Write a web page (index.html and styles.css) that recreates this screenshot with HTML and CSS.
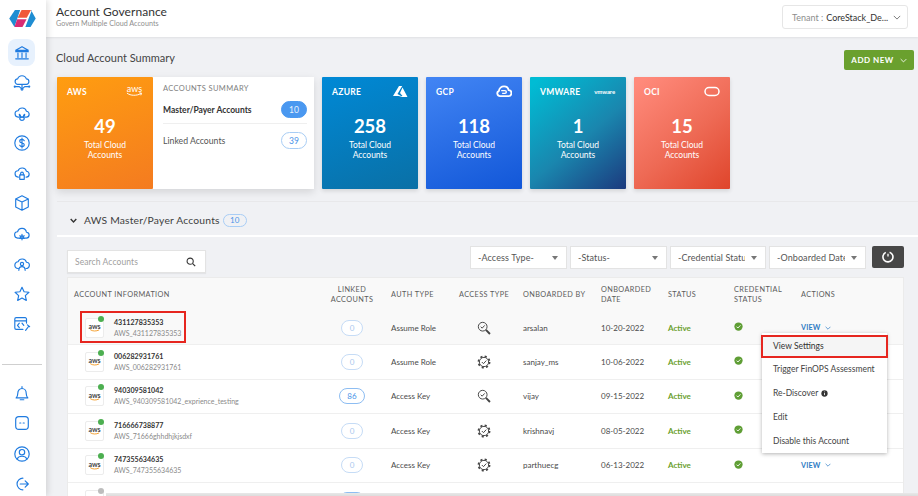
FILE: index.html
```html
<!DOCTYPE html>
<html lang="en">
<head>
<meta charset="utf-8">
<title>Account Governance</title>
<link rel="stylesheet" href="styles.css">
</head>
<body>
<svg class="defs" width="0" height="0">
  <symbol id="i-check" viewBox="0 0 12 12"><circle cx="6" cy="6" r="5.5" fill="#5f9e35"/><path d="M3.4 6.2l1.8 1.8 3.4-3.6" fill="none" stroke="#fff" stroke-width="1.2"/></symbol>
  <symbol id="i-gear" viewBox="0 0 16 16"><circle cx="8" cy="8" r="5.3" fill="none" stroke="#444" stroke-width="1.1"/><circle cx="8" cy="8" r="6.4" fill="none" stroke="#444" stroke-width="1.9" stroke-dasharray="2.4 2.63"/><path d="M5.5 8l1.900 1.900 3.200-3.500" fill="none" stroke="#444" stroke-width="1.1"/></symbol>
  <symbol id="i-key" viewBox="0 0 16 16"><circle cx="6.5" cy="6.5" r="5" fill="none" stroke="#444" stroke-width="1.1"/><path d="M4.2 6.5l1.7 1.7 2.9-3.2" fill="none" stroke="#444" stroke-width="1.1"/><path d="M10.200 10.200l4.600 4.600" stroke="#444" stroke-width="2.200"/></symbol>
  <symbol id="i-chev" viewBox="0 0 10 6"><path d="M1 1l4 4 4-4" fill="none" stroke="currentColor" stroke-width="1.2"/></symbol>
  <symbol id="i-chev-b" viewBox="0 0 10 6"><path d="M1 1l4 4 4-4" fill="none" stroke="currentColor" stroke-width="2"/></symbol>
</svg>

<div class="app">
  <aside class="sidebar">
    <svg class="logo" viewBox="0 0 28 18">
      <path d="M0 9L6 0h5.500L5.500 18z" fill="#1f8dd2"/>
      <path d="M23 0l5 9-5.500 9H17L24 0z" fill="#1f8dd2"/>
      <path d="M13 0h10l-4.500 8.300H8.800z" fill="#f0583a"/>
      <path d="M8.300 9.700h10L14 18H5.500z" fill="#d92c73"/>
    </svg>
    <nav class="nav nav-main">
      <a class="nav-item active"><svg viewBox="0 0 20 20" class="ni"><path d="M3 7l7-4 7 4zM3 8.500h14M5.500 10v5M10 10v5M14.500 10v5M3 16.500h14"/></svg></a>
      <a class="nav-item"><svg viewBox="0 0 20 20" class="ni"><path d="M5.500 11.500a3 3 0 0 1-.3-6 5 5 0 0 1 9.600 0 3 3 0 0 1-.3 6zM10 11.500V16M2 14h5l1.500 1.500M18 14h-5l-1.500 1.500"/><circle cx="10" cy="17" r="1"/><circle cx="2" cy="14" r=".6"/><circle cx="18" cy="14" r=".6"/></svg></a>
      <a class="nav-item"><svg viewBox="0 0 20 20" class="ni"><path d="M6 14.500a3.500 3.500 0 0 1-.4-7 5 5 0 0 1 9.400.6 3.200 3.200 0 0 1-.5 6.400H6z"/><path d="M7 11.500a3 3 0 0 0 6 0 3 3 0 0 0-.3 5 3 3 0 0 1-5.400 0A3 3 0 0 0 7 11.500z"/></svg></a>
      <a class="nav-item"><svg viewBox="0 0 20 20" class="ni"><circle cx="10" cy="10" r="8"/><path d="M12.500 7.500C12 6.500 11 6 10 6c-1.500 0-2.500.8-2.500 2s1 1.700 2.500 2 2.500.8 2.500 2-1 2-2.500 2c-1 0-2-.5-2.500-1.500M10 4.500v11"/></svg></a>
      <a class="nav-item"><svg viewBox="0 0 20 20" class="ni"><path d="M6 14.500a3.500 3.500 0 0 1-.4-7 5 5 0 0 1 9.400.6 3.200 3.200 0 0 1-.5 6.400"/><rect x="7.500" y="12" width="5" height="5"/><path d="M8.500 12v-1.500a1.500 1.500 0 0 1 3 0V12"/></svg></a>
      <a class="nav-item"><svg viewBox="0 0 20 20" class="ni"><path d="M10 2l7 3.500v9L10 18l-7-3.500v-9zM3 5.500L10 9l7-3.500M10 9v9"/></svg></a>
      <a class="nav-item"><svg viewBox="0 0 20 20" class="ni"><path d="M5.500 14.500a3.500 3.500 0 0 1-.4-7 5 5 0 0 1 9.800.6 3.200 3.200 0 0 1-.4 6.400z"/><circle cx="10" cy="13.500" r="1.500"/><path d="M10 10.500v1.500M10 15v1.500M7.500 12l1.300.8M12.500 15l-1.300-.8M7.500 15l1.300-.8M12.500 12l-1.300.8"/></svg></a>
      <a class="nav-item"><svg viewBox="0 0 20 20" class="ni"><path d="M6 15a3.500 3.500 0 0 1-.4-7.500 5 5 0 0 1 9.400.6 3.400 3.400 0 0 1-.6 6.900"/><circle cx="10" cy="10" r="1.800"/><path d="M6.500 17c0-2.500 1.500-4 3.500-4s3.500 1.500 3.500 4"/></svg></a>
      <a class="nav-item"><svg viewBox="0 0 20 20" class="ni"><path d="M10 2.500l2.300 5 5.400.6-4 3.700 1.100 5.400L10 14.500l-4.800 2.700 1.100-5.400-4-3.700 5.400-.6z"/></svg></a>
      <a class="nav-item"><svg viewBox="0 0 20 20" class="ni"><path d="M15 9V4.500a1.500 1.500 0 0 0-1.500-1.500h-10A1.500 1.500 0 0 0 2 4.500v10A1.500 1.500 0 0 0 3.500 16H11M2 6.500h13M7 9l-2 2.500L7 14M10 9l2 2.500M14 17l3.500-4.500M16 11l2.500 2"/></svg></a>
    </nav>
    <div class="nav-divider"></div>
    <nav class="nav nav-main">
      <a class="nav-item"><svg viewBox="0 0 20 20" class="ni"><path d="M3.500 15.500c1.500-1.500 1.800-2.500 1.800-5 0-3 2-5.500 4.700-5.500s4.700 2.500 4.700 5.500c0 2.500.3 3.500 1.800 5zM10 3v2M8 17.500h4"/></svg></a>
      <a class="nav-item"><svg viewBox="0 0 20 20" class="ni"><rect x="3" y="3" width="14" height="14" rx="3.500"/><path d="M7.500 10h1.200M11.300 10h1.200"/></svg></a>
      <a class="nav-item"><svg viewBox="0 0 20 20" class="ni"><circle cx="10" cy="10" r="8"/><circle cx="10" cy="8" r="3"/><path d="M4.500 15.500c1-2 3-3 5.500-3s4.500 1 5.500 3"/></svg></a>
      <a class="nav-item"><svg viewBox="0 0 20 20" class="ni"><path d="M11 3.500A6.500 6.500 0 1 0 11 16.500M8 10h9M13.500 6.500L17 10l-3.500 3.500"/></svg></a>
    </nav>
  </aside>

  <div class="content">
    <header class="topbar">
      <div class="titles">
        <h1 class="title">Account Governance</h1>
        <p class="subtitle">Govern Multiple Cloud Accounts</p>
      </div>
      <div class="tenant">
        <span class="tenant-label">Tenant :</span>
        <span class="tenant-value">CoreStack_De...</span>
        <svg class="tenant-chev"><use href="#i-chev"/></svg>
      </div>
    </header>

    <main class="main">
      <div class="summary-head">
        <h2 class="summary-title">Cloud Account Summary</h2>
        <button class="add-new">ADD NEW <svg class="add-chev"><use href="#i-chev"/></svg></button>
      </div>

      <div class="cards">
        <div class="aws-group">
          <div class="card card-aws">
            <div class="card-top"><span class="card-name">AWS</span>
              <span class="aws-mark"><span class="aws-word">aws</span><svg viewBox="0 0 18 5" class="smile"><path d="M1 1c4 3 10 3 15 .5M14 .8l2.500.3-.8 2.200" fill="none" stroke="#fff" stroke-width="1"/></svg></span></div>
            <div class="card-num">49</div>
            <div class="card-label">Total Cloud<br>Accounts</div>
          </div>
          <div class="acc-summary">
            <div class="acc-title">ACCOUNTS SUMMARY</div>
            <div class="acc-row acc-row-line"><b class="acc-strong">Master/Payer Accounts</b><span class="pill pill-solid">10</span></div>
            <div class="acc-row"><span class="acc-name">Linked Accounts</span><span class="pill">39</span></div>
          </div>
        </div>
        <div class="card card-azure">
          <div class="card-top"><span class="card-name">AZURE</span>
            <svg viewBox="0 0 16 12" class="card-logo"><path d="M7 .5h3.200L5.500 8.500 9 10.500H1zM10.500 2L15.500 11.500H6.500l4-1-2.500-3z" fill="#fff"/></svg></div>
          <div class="card-num">258</div>
          <div class="card-label">Total Cloud<br>Accounts</div>
        </div>
        <div class="card card-gcp">
          <div class="card-top"><span class="card-name">GCP</span>
            <svg viewBox="0 0 16 14" class="card-logo"><path d="M8 1.500a5 5 0 0 1 5 4 3.200 3.200 0 0 1-.5 6.500H4a3 3 0 0 1-1.500-5.700A5.500 5.500 0 0 1 8 1.500z" fill="none" stroke="#fff" stroke-width="2"/><path d="M5 6h4a1.500 1.500 0 0 1 0 3H6" fill="none" stroke="#fff" stroke-width="1.500"/></svg></div>
          <div class="card-num">118</div>
          <div class="card-label">Total Cloud<br>Accounts</div>
        </div>
        <div class="card card-vmware">
          <div class="card-top"><span class="card-name">VMWARE</span><span class="vm-word">vmware</span></div>
          <div class="card-num">1</div>
          <div class="card-label">Total Cloud<br>Accounts</div>
        </div>
        <div class="card card-oci">
          <div class="card-top"><span class="card-name">OCI</span>
            <svg viewBox="0 0 16 10" class="card-logo"><rect x="1" y="1" width="14" height="8" rx="4" fill="none" stroke="#fff" stroke-width="1.500"/></svg></div>
          <div class="card-num">15</div>
          <div class="card-label">Total Cloud<br>Accounts</div>
        </div>
      </div>

      <section class="panel">
        <div class="panel-head">
          <svg class="panel-chev"><use href="#i-chev-b"/></svg>
          <h3 class="panel-title">AWS Master/Payer Accounts</h3>
          <span class="pill pill-small">10</span>
        </div>

        <div class="toolbar">
          <div class="search">
            <span class="search-text">Search Accounts</span>
            <svg viewBox="0 0 12 12" class="search-icon"><circle cx="5" cy="5" r="3.700" fill="none" stroke="#333" stroke-width="1.300"/><path d="M8 8l3 3" stroke="#333" stroke-width="1.500"/></svg>
          </div>
          <div class="filters">
            <div class="filter">-Access Type-<i class="caret"></i></div>
            <div class="filter">-Status-<i class="caret"></i></div>
            <div class="filter filter-narrow"><span class="clip">-Credential Status-</span><i class="caret"></i></div>
            <div class="filter"><span class="clip">-Onboarded Date-</span><i class="caret"></i></div>
            <button class="reset"><svg viewBox="0 0 14 14" class="reset-icon"><path d="M8.600 2.200a5 5 0 1 1-3.800.2" fill="none" stroke="#fff" stroke-width="1.600"/><path d="M7 3.800v2.700" stroke="#fff" stroke-width="1.300"/></svg></button>
          </div>
        </div>

        <div class="table">
          <div class="row row-head">
            <div class="c c1">ACCOUNT INFORMATION</div>
            <div class="c c2">LINKED ACCOUNTS</div>
            <div class="c c3">AUTH TYPE</div>
            <div class="c c4">ACCESS TYPE</div>
            <div class="c c5">ONBOARDED BY</div>
            <div class="c c6">ONBOARDED DATE</div>
            <div class="c c7">STATUS</div>
            <div class="c c8">CREDENTIAL STATUS</div>
            <div class="c c9">ACTIONS</div>
          </div>

          <div class="row row-first">
            <div class="c c1 acct"><span class="aws-box"><span class="aws-dark">aws</span><svg viewBox="0 0 18 5" class="smile-o"><path d="M1 1c4 3 10 3 15 .5" fill="none" stroke="#f29111" stroke-width="1.400"/></svg><i class="dot"></i></span><div><div class="acct-id">431127835353</div><div class="acct-name">AWS_431127835353</div></div></div>
            <div class="c c2"><span class="pill pill-zero">0</span></div>
            <div class="c c3">Assume Role</div>
            <div class="c c4"><svg class="at"><use href="#i-key"/></svg></div>
            <div class="c c5">arsalan</div>
            <div class="c c6">10-20-2022</div>
            <div class="c c7 active">Active</div>
            <div class="c c8"><svg class="ok"><use href="#i-check"/></svg></div>
            <div class="c c9 view">VIEW <svg class="view-chev"><use href="#i-chev"/></svg></div>
          </div>

          <div class="row">
            <div class="c c1 acct"><span class="aws-box"><span class="aws-dark">aws</span><svg viewBox="0 0 18 5" class="smile-o"><path d="M1 1c4 3 10 3 15 .5" fill="none" stroke="#f29111" stroke-width="1.400"/></svg><i class="dot"></i></span><div><div class="acct-id">006282931761</div><div class="acct-name">AWS_006282931761</div></div></div>
            <div class="c c2"><span class="pill pill-zero">0</span></div>
            <div class="c c3">Assume Role</div>
            <div class="c c4"><svg class="at"><use href="#i-gear"/></svg></div>
            <div class="c c5">sanjay_ms</div>
            <div class="c c6">10-06-2022</div>
            <div class="c c7 active">Active</div>
            <div class="c c8"><svg class="ok"><use href="#i-check"/></svg></div>
            <div class="c c9"></div>
          </div>

          <div class="row">
            <div class="c c1 acct"><span class="aws-box"><span class="aws-dark">aws</span><svg viewBox="0 0 18 5" class="smile-o"><path d="M1 1c4 3 10 3 15 .5" fill="none" stroke="#f29111" stroke-width="1.400"/></svg><i class="dot"></i></span><div><div class="acct-id">940309581042</div><div class="acct-name">AWS_940309581042_exprience_testing</div></div></div>
            <div class="c c2"><span class="pill pill-blue">86</span></div>
            <div class="c c3">Access Key</div>
            <div class="c c4"><svg class="at"><use href="#i-key"/></svg></div>
            <div class="c c5">vijay</div>
            <div class="c c6">09-15-2022</div>
            <div class="c c7 active">Active</div>
            <div class="c c8"><svg class="ok"><use href="#i-check"/></svg></div>
            <div class="c c9"></div>
          </div>

          <div class="row">
            <div class="c c1 acct"><span class="aws-box"><span class="aws-dark">aws</span><svg viewBox="0 0 18 5" class="smile-o"><path d="M1 1c4 3 10 3 15 .5" fill="none" stroke="#f29111" stroke-width="1.400"/></svg><i class="dot"></i></span><div><div class="acct-id">716666738877</div><div class="acct-name">AWS_71666ghhdhjkjsdxf</div></div></div>
            <div class="c c2"><span class="pill pill-zero">0</span></div>
            <div class="c c3">Access Key</div>
            <div class="c c4"><svg class="at"><use href="#i-gear"/></svg></div>
            <div class="c c5">krishnavj</div>
            <div class="c c6">08-05-2022</div>
            <div class="c c7 active">Active</div>
            <div class="c c8"><svg class="ok"><use href="#i-check"/></svg></div>
            <div class="c c9"></div>
          </div>

          <div class="row">
            <div class="c c1 acct"><span class="aws-box"><span class="aws-dark">aws</span><svg viewBox="0 0 18 5" class="smile-o"><path d="M1 1c4 3 10 3 15 .5" fill="none" stroke="#f29111" stroke-width="1.400"/></svg><i class="dot"></i></span><div><div class="acct-id">747355634635</div><div class="acct-name">AWS_747355634635</div></div></div>
            <div class="c c2"><span class="pill pill-zero">0</span></div>
            <div class="c c3">Access Key</div>
            <div class="c c4"><svg class="at"><use href="#i-gear"/></svg></div>
            <div class="c c5">parthuecg</div>
            <div class="c c6">06-13-2022</div>
            <div class="c c7 active">Active</div>
            <div class="c c8"><svg class="ok"><use href="#i-check"/></svg></div>
            <div class="c c9 view">VIEW <svg class="view-chev"><use href="#i-chev"/></svg></div>
          </div>

          <div class="row">
            <div class="c c1 acct"><span class="aws-box"><span class="aws-dark">aws</span><i class="dot dot-grey"></i></span></div>
            <div class="c c2"><span class="pill pill-blue"></span></div>
          </div>
        </div>
      </section>

      <div class="mark mark-acct"></div>
      <div class="menu">
        <div class="menu-item menu-selected">View Settings</div>
        <div class="menu-item">Trigger FinOPS Assessment</div>
        <div class="menu-item">Re-Discover <svg viewBox="0 0 10 10" class="info"><circle cx="5" cy="5" r="4.500" fill="#333"/><path d="M5 4.300v3M5 2.300v1" stroke="#fff" stroke-width="1.200"/></svg></div>
        <div class="menu-item">Edit</div>
        <div class="menu-item">Disable this Account</div>
      </div>
      <div class="bottom-shade"></div>
    </main>
  </div>
</div>
</body>
</html>
```

FILE: styles.css
```css
* { box-sizing: border-box; }
html, body { margin: 0; height: 100%; overflow: hidden; }
body { font-family: "Lato", "Liberation Sans", sans-serif; color: #3a3a3a; background: #f0f1f4; }
.defs { position: absolute; }
.app { display: flex; width: 918px; height: 496px; overflow: hidden; }

/* Sidebar */
.sidebar { width: 46px; flex: none; background: #fff; box-shadow: 2px 0 6px rgba(0,0,0,.12); display: flex; flex-direction: column; align-items: center; padding-top: 10px; position: relative; z-index: 3; }
.logo { width: 27px; height: 17px; margin-bottom: 12px; margin-right: 1px; display: block; flex: none; }
.nav-main { display: flex; flex-direction: column; gap: 3.200px; margin-right: 3px; }
.nav-item { width: 27px; height: 27px; display: flex; align-items: center; justify-content: center; border-radius: 8px; }
.nav-item.active { background: #e7f1fd; }
.ni { width: 18px; height: 18px; fill: none; stroke: #1f7be0; stroke-width: 1.300; stroke-linecap: round; stroke-linejoin: round; }
.nav-divider { width: 40px; height: 1px; background: #cfcfcf; margin: 26px 3px 15px 0; flex: none; }

/* Top bar */
.content { flex: 1; min-width: 0; display: flex; flex-direction: column; }
.topbar { height: 37px; flex: none; background: #fff; box-shadow: 0 1px 2px rgba(0,0,0,.07); display: flex; justify-content: space-between; padding: 5px 10px 0 10px; position: relative; z-index: 2; }
.title { margin: 0; font-size: 12px; line-height: 14px; font-weight: 400; color: #333; letter-spacing: .05px; }
.subtitle { margin: 0; font-size: 7.200px; line-height: 9px; color: #8f8f8f; }
.tenant { width: 126px; height: 24px; background: #fff; border: 1px solid #e6e6e6; border-radius: 3px; display: flex; align-items: center; padding: 0 6px 0 9px; font-size: 9px; gap: 3px; }
.tenant-label { color: #8d8d8d; }
.tenant-value { color: #333; }
.tenant-chev { width: 8px; height: 5px; margin-left: auto; color: #777; }

/* Main */
.main { flex: 1; position: relative; background: #f0f1f4; padding: 0 0 0 11px; min-height: 0; overflow: hidden; }
.summary-head { display: flex; justify-content: space-between; align-items: flex-start; height: 40px; }
.summary-title { margin: 0 0 0 -1px; font-size: 11px; line-height: 15px; padding-top: 13px; font-weight: 400; color: #444; }
.add-new { width: 70px; height: 20px; margin: 13px 4px 0 0; background: #6aa02e; color: #fff; border: 0; border-radius: 2px; font: 700 8px "Lato", sans-serif; letter-spacing: .5px; display: flex; align-items: center; justify-content: center; gap: 6px; padding: 0; }
.add-chev { width: 7px; height: 5px; }

.cards { display: flex; gap: 8px; height: 112px; }
.aws-group { display: flex; width: 257px; box-shadow: 0 3px 8px rgba(0,0,0,.12); background: #fff; }
.card { width: 96px; flex: none; color: #fff; padding: 9px 10px 0; text-align: center; box-shadow: 0 2px 4px rgba(0,0,0,.12); border-radius: 1px; }
.card-aws { background: linear-gradient(160deg, #ff9d10, #f47b20); box-shadow: none; }
.card-azure { background: linear-gradient(160deg, #0089d6, #0a70a6); }
.card-gcp { background: linear-gradient(160deg, #4285f4, #1257d8); }
.card-vmware { background: linear-gradient(140deg, #00bcd4 5%, #1a86ae 55%, #1c3a7e 100%); }
.card-oci { background: linear-gradient(140deg, #ff8a7b 5%, #ee6a55 55%, #df452b 100%); }
.card-top { display: flex; justify-content: space-between; align-items: center; height: 11px; }
.card-name { font-size: 8.500px; font-weight: 700; letter-spacing: .3px; }
.card-logo { width: 16px; height: 13px; }
.aws-mark { display: flex; flex-direction: column; align-items: center; width: 17px; margin-top: -1px; }
.aws-word { font-size: 9px; line-height: 7px; font-weight: 400; }
.smile { width: 17px; height: 5px; }
.vm-word { font-size: 6px; letter-spacing: -.1px; font-weight: 700; margin-right: 1px; }
.card-num { font-size: 18.500px; line-height: 20px; font-weight: 700; margin-top: 19px; }
.card-label { font-size: 8.500px; line-height: 9.500px; margin-top: 5px; }

.acc-summary { flex: 1; padding: 6px 7px 0 10px; }
.acc-title { font-size: 7.500px; line-height: 12px; color: #808080; letter-spacing: .35px; font-weight: 400; }
.acc-row { display: flex; justify-content: space-between; align-items: center; height: 29px; font-size: 8.700px; color: #555; }
.acc-row-line { border-bottom: 1px solid #efefef; height: 28px; margin-top: 1px; margin-bottom: 2px; }
.acc-strong { font-weight: 700; color: #333; font-size: 8.500px; }
.pill { display: inline-flex; align-items: center; justify-content: center; width: 26px; height: 17px; border: 1px solid #a8cdf5; border-radius: 9px; font-size: 8.500px; color: #4b93e8; background: #fff; }
.pill-solid { background: #4a98f0; border-color: #4a98f0; color: #e5f1fd; }
.pill-small { width: 24px; height: 13px; background: transparent; font-size: 8px; margin-left: 3px; }
.pill-zero { width: 22px; height: 16px; color: #a9c8ee; border-color: #c6dcf6; font-size: 8px; }
.pill-blue { width: 26px; height: 16px; border-color: #8dbdf2; font-size: 8px; }

/* Panel */
.panel { margin-top: 12px; border-top: 1px solid #e8e8ea; }
.panel-head { display: flex; align-items: center; height: 35px; border-bottom: 2px solid #fff; padding-top: 3px; }
.panel-chev { width: 7px; height: 5px; color: #333; margin: 0 7px 0 13px; }
.panel-title { margin: 0; font-size: 10.300px; font-weight: 400; color: #3e3e3e; letter-spacing: .2px; }
.toolbar { display: flex; justify-content: space-between; align-items: flex-start; height: 40px; padding: 9px 14px 0 10px; }
.search { width: 139px; height: 23px; margin-top: 4px; background: #fff; border: 1px solid #e3e3e3; box-shadow: 0 1px 1px rgba(0,0,0,.05); display: flex; align-items: center; justify-content: space-between; padding: 0 9px 0 7px; }
.search-text { font-size: 8.500px; color: #a0a0a0; letter-spacing: .1px; }
.search-icon { width: 10px; height: 10px; }
.filters { display: flex; gap: 3px; }
.filter { width: 97px; height: 23px; background: #fff; border: 1px solid #e3e3e3; font-size: 9px; color: #555; display: flex; align-items: center; padding: 0 8px 0 7px; letter-spacing: .1px; }
.filter-narrow { width: 96px; }
.clip { flex: 1; min-width: 0; overflow: hidden; white-space: nowrap; margin-right: 6px; }
.caret { margin-left: auto; flex: none; width: 0; height: 0; border-left: 3px solid transparent; border-right: 3px solid transparent; border-top: 4px solid #777; }
.reset { width: 32px; height: 22px; margin-left: 3px; background: #474747; border: 0; border-radius: 2px; display: flex; align-items: center; justify-content: center; padding: 0; }
.reset-icon { width: 14px; height: 14px; }

.table { margin: 0 14px 0 10px; background: #fff; border: 1px solid #ebebeb; border-bottom: 0; }
.row { display: grid; grid-template-columns: 258px 52px 80px 52px 90px 67px 67px 67px 1fr; height: 34.500px; align-items: center; border-bottom: 1px solid #efefef; font-size: 8px; color: #4a4a4a; }
.row-head { height: 33px; background: #f9f9f9; font-size: 7.300px; color: #5c5c5c; letter-spacing: .4px; line-height: 10px; border-bottom: 0; }
.row-first { height: 34px; background: #f9f9f9; }
.c { min-width: 0; }
.row-head .c1 { padding-left: 6px; }
.c2 { text-align: center; display: flex; justify-content: center; }
.c3, .c5 { padding-left: 13px; }
.c4 { text-align: center; }
.c6 { padding-left: 1px; }
.c7 { padding-left: 1px; }
.acct { display: flex; align-items: center; gap: 10px; padding-left: 17px; }
.aws-box { position: relative; width: 19px; height: 20px; background: #fff; border: 1px solid #ececec; border-radius: 2px; display: flex; flex-direction: column; align-items: center; justify-content: center; flex: none; }
.aws-dark { font-size: 7px; line-height: 6px; font-weight: 700; color: #444; }
.smile-o { width: 12px; height: 3px; }
.dot { position: absolute; top: -3px; right: -1px; width: 6px; height: 6px; border-radius: 50%; background: #4caf50; }
.dot-grey { background: #bdbdbd; }
.acct-id { font-size: 7.100px; line-height: 11px; font-weight: 700; color: #333; }
.acct-name { font-size: 7px; line-height: 11px; color: #8a8a8a; }
.at { width: 14px; height: 14px; display: block; margin: 0 auto; }
.active { color: #6aa02e; font-weight: 700; font-size: 8px; }
.ok { width: 9px; height: 9px; display: block; margin-top: -2px; }
.view { color: #2f7cc4; font-size: 7.200px; font-weight: 700; display: flex; align-items: center; gap: 4px; letter-spacing: .2px; }
.view-chev { width: 6px; height: 4px; }

/* Overlays */
.mark { position: absolute; border: 2px solid #e6261f; pointer-events: none; }
.mark-acct { left: 34px; top: 274px; width: 106px; height: 32px; }
.menu { position: absolute; left: 716px; top: 296px; width: 125px; background: #fff; box-shadow: 0 1px 4px rgba(0,0,0,.3); font-size: 8.500px; color: #444; padding: 2px 0 0; z-index: 4; }
.menu-item { height: 24px; display: flex; align-items: center; padding-left: 11px; gap: 3px; }
.menu-selected { height: 23px; background: #f5f5f5; border: 2px solid #e6261f; margin: 0 -1px -1px; padding: 0 0 2px 10px; color: #333; }
.info { width: 7px; height: 7px; }
.bottom-shade { position: absolute; left: 60px; right: 0; bottom: 0; height: 3px; background: linear-gradient(#e8e8e8, #dcdcdc); z-index: 5; }
```
